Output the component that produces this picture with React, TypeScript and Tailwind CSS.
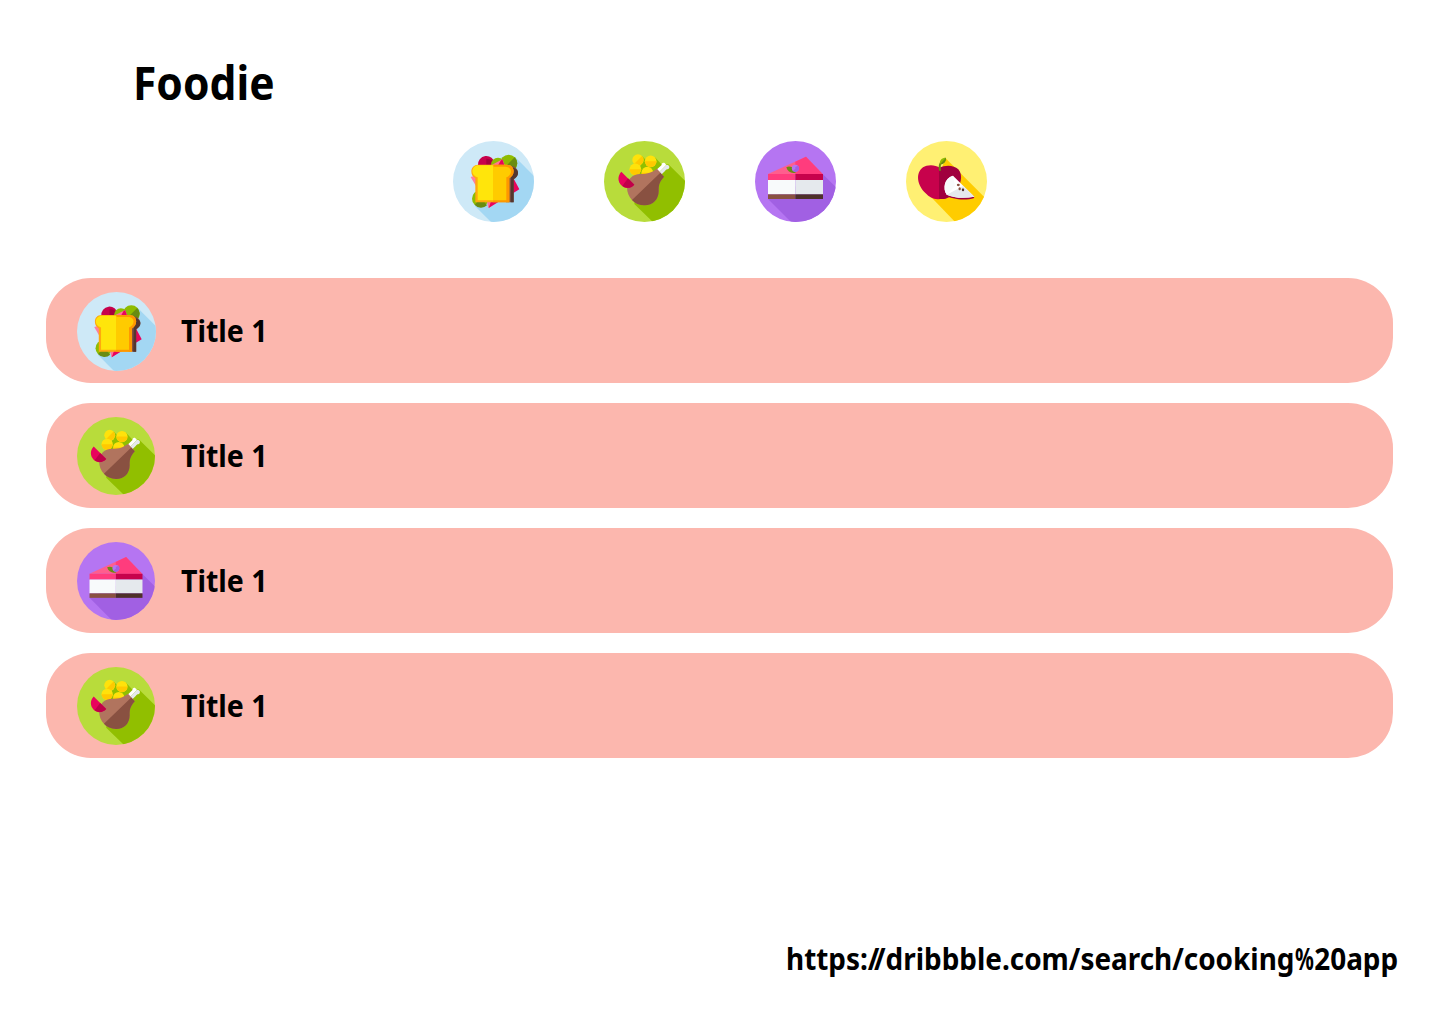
import React, { useId } from 'react';

type IconProps = { className: string };

function Disc({ className, base, shade, shadow, children }: IconProps & { base: string; shade: string; shadow: string; children: React.ReactNode }) {
  const id = useId();
  return (
    <svg viewBox="15 15 243 243" className={className} aria-hidden="true">
      <clipPath id={id}>
        <circle cx="136.5" cy="136.5" r="121.5" />
      </clipPath>
      <circle cx="136.5" cy="136.5" r="121.5" fill={base} />
      <path d={shadow} fill={shade} clipPath={`url(#${id})`} />
      {children}
    </svg>
  );
}

function Sandwich({ className }: IconProps) {
  return (
    <Disc className={className} base="#cee9f7" shade="#a3d7f3" shadow="M202 64 L275 137 V270 H141 L80 209 Z">
      <path d="M90 88a25 25 0 0 1 50-6v20H90Z" fill="#c7024c" />
      <path d="M115 68a25 25 0 0 1 25 18h-25Z" fill="#a6003e" />
      <circle cx="150" cy="86" r="21" fill="#8fbc00" />
      <circle cx="182" cy="82" r="26" fill="#8fbc00" />
      <path d="M200 64a26 26 0 0 1-25 43l-12-6Z" fill="#698c12" />
      <path d="M127 89 163 70l12 30h-48Z" fill="#ff7296" />
      <path d="m158 74 5-4 10 29h-29Z" fill="#e8045c" />
      <circle cx="97" cy="188" r="25" fill="#8fbc00" />
      <path d="M80 206a25 25 0 0 0 37 2l-18-22Z" fill="#698c12" />
      <path d="M68 123l20-6v40Z" fill="#ff7e9c" />
      <path d="M190 115l24 45-24 15Z" fill="#e8045c" />
      <path d="M116 193h43l-38 23Z" fill="#ff7296" />
      <path d="M130 193h29l-37 23Z" fill="#e8045c" />
      <path d="M174 90h16c10 0 20 9 20 20 0 10-6 15-13 20v69h-23Z" fill="#805041" />
      <path d="M190 94c11 2 20 8 20 17 0 9-6 14-13 18v70h-9Z" fill="#54362f" />
      <path d="M90 86h86c14 0 21 9 21 20 0 10-6 17-13 21v72H82v-72c-7-4-12-10-12-21 0-11 8-20 20-20Z" fill="#ffa90d" />
      <path d="M135 86h41c14 0 21 9 21 20 0 10-6 17-13 21v72h-49Z" fill="#ff9700" />
      <path d="M92 88h44v105H89v-69c-9-2-16-9-16-18 0-10 8-18 19-18Z" fill="#ffe50b" />
      <path d="M135 92h37c10 0 17 6 17 14 0 9-6 15-14 18v69h-40Z" fill="#ffcb00" />
    </Disc>
  );
}

function Drumstick({ className }: IconProps) {
  return (
    <Disc className={className} base="#b8dc3b" shade="#91bf00" shadow="M129 60 L150 81 L168 64 L190 88 L208 85 L275 151 V270 H174 L106 204 Z">
      <circle cx="117" cy="72" r="17" fill="#ffe20b" />
      <path d="M129 60a17 17 0 0 1-24 24Z" fill="#ffc900" />
      {[[155, 76], [109, 100], [145, 110]].map(([x, y]) => (
        <g key={`${x}-${y}`}>
          <circle cx={x} cy={y} r="17.5" fill="#ffe20b" />
          <path d={`M${x - 17.5} ${y}H${x + 17.5}A17.5 17.5 0 0 1 ${x - 17.5} ${y}Z`} fill="#ffc900" />
        </g>
      ))}
      <path d="m171 103 17-16c-1-5 4-9 9-6l5 6-26 26Z" fill="#fff" />
      <path d="m202 87c8-1 12 6 7 11l-3 2c-3 0-6 2-8 5l-13 13-9-5Z" fill="#e5e9ed" />
      <path d="M174 98 195 122c-16 18-16 28-16 43 0 25-17 43-42 43-31 0-53-24-53-54 0-24 17-40 40-40 24 0 34-5 50-16Z" fill="#b1745e" />
      <path d="M184 110 195 122c-16 18-16 28-16 43 0 25-17 43-42 43-16 0-29-6-38-16Z" fill="#895141" />
      <path d="M67 107 106 146c-13 13-29 12-39 2-10-10-13-27 0-41Z" fill="#e8045c" />
      <path d="m87 127 19 19c-11 12-25 12-36 4Z" fill="#c00049" />
    </Disc>
  );
}

function Cake({ className }: IconProps) {
  return (
    <Disc className={className} base="#b575f2" shade="#a160e3" shadow="M218 114 L275 171 V270 H135 L54 189 Z">
      <path d="M54 114 168 62 218 114Z" fill="#ff5e8e" />
      <path d="M136 77 168 62 218 114H136Z" fill="#ff3c7d" />
      <path d="M54 114h82v18H54Z" fill="#ff3c7d" />
      <path d="M136 114h83v18h-83Z" fill="#c7024c" />
      <path d="M54 132h82v43H54Z" fill="#f8fafb" />
      <path d="M136 132h83v43h-83Z" fill="#e5e9ed" />
      <path d="M54 175h82v14H54Z" fill="#895141" />
      <path d="M136 175h83v14h-83Z" fill="#4e3029" />
      <path d="M109 94c8-5 19-1 25 5l3 11c-13 3-24-2-28-16Z" fill="#698c12" />
      <circle cx="136" cy="97" r="10.5" fill="#b575f2" />
      <path d="m144 89a10.5 10.5 0 0 1-15 15l7-6v-5Z" fill="#a160e3" />
    </Disc>
  );
}

function Apple({ className }: IconProps) {
  return (
    <Disc className={className} base="#fff073" shade="#ffcc00" shadow="M134 67 L275 208 V270 H174 L88 181 Z">
      <path d="M118 96C100 84 78 86 66 94 42 112 49 149 74 172c12 13 25 20 44 17Z" fill="#c7024c" />
      <path d="M114 96c20-10 44-9 58 4 16 18 7 50-10 68-14 18-31 24-48 20Z" fill="#a0003e" />
      <path d="M114 104c-2-16 0-24 9-31l3 3c-7 7-8 15-6 28Z" fill="#698c12" />
      <path d="M135 65c1 12-7 20-18 20-2-12 5-20 18-20Z" fill="#8fbc00" />
      <path d="M135 65c1 12-7 20-18 20Z" fill="#698c12" />
      <path d="M131 177c22 13 60 18 89 9l-4-8-63-10Z" fill="#a0003e" />
      <path d="M156 119 220 182c-30 6-62 4-83-6-12-18-8-49 19-57Z" fill="#fff" />
      <path d="m187 150 33 32c-30 6-62 4-83-6Z" fill="#e5e9ed" />
      <path d="M156 119c-27 8-31 39-19 57l25-26Z" fill="#f8fafb" />
      <ellipse cx="172" cy="147" rx="4.5" ry="3.5" fill="#895141" />
      <ellipse cx="176" cy="158" rx="3.5" ry="4.5" fill="#895141" />
      <ellipse cx="186" cy="161" rx="3.5" ry="4.5" fill="#54362f" />
    </Disc>
  );
}

const categories = [Sandwich, Drumstick, Cake, Apple];
const recipes = [
  { Icon: Sandwich, title: 'Title 1', size: 'size-[79px]' },
  { Icon: Drumstick, title: 'Title 1', size: 'size-[78px]' },
  { Icon: Cake, title: 'Title 1', size: 'size-[78px]' },
  { Icon: Drumstick, title: 'Title 1', size: 'size-[78px]' },
];

export default function App() {
  return (
    <main className="flex h-[1024px] w-[1440px] flex-col overflow-hidden bg-white font-['Noto_Sans',sans-serif] font-bold text-black">
      <h1 className="mt-[52px] ml-[133px] h-[60px] w-fit origin-left scale-x-[0.925] text-[46px] leading-[60px] whitespace-nowrap">Foodie</h1>
      <nav className="mt-[29px] flex justify-center gap-[70px]">
        {categories.map((Icon, i) => (
          <Icon key={i} className="size-[81px]" />
        ))}
      </nav>
      <ul className="mt-14 mr-[47px] ml-[46px] flex flex-col gap-5">
        {recipes.map(({ Icon, title, size }, i) => (
          <li key={i} className="flex h-[105px] items-start rounded-[45px] bg-[#fcb7ae] pt-[14px] pl-[31px]">
            <div className="w-[104px]">
              <Icon className={size} />
            </div>
            <span className="mt-1 origin-left scale-x-[0.92] text-[31px] leading-[68px] whitespace-nowrap">{title}</span>
          </li>
        ))}
      </ul>
      <p className="mt-[176px] mr-[42px] w-fit origin-right scale-x-[0.9] self-end text-[31px] leading-[48px] whitespace-nowrap">
        https:<span className="tracking-[-6px]">/</span>/dribbble.com/search/cooking<span className="-mx-[3px] inline-block scale-x-75">%</span>20app
      </p>
    </main>
  );
}
